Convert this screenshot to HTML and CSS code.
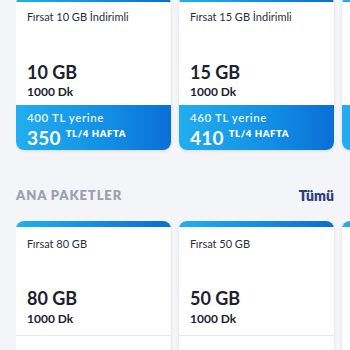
FILE: index.html
```html
<!DOCTYPE html>
<html>
<head>
<meta charset="utf-8">
<link rel="stylesheet" href="styles.css">
</head>
<body>
<div class="page">
  <div class="row row-top">
    <div class="card">
      <div class="bar"></div>
      <div class="body">
        <div class="title">Fırsat 10 GB İndirimli</div>
        <div class="gb">10 GB</div>
        <div class="dk">1000 Dk</div>
      </div>
      <div class="promo">
        <div class="old">400 TL yerine</div>
        <div class="price"><span class="num">350</span><span class="unit">TL/4 HAFTA</span></div>
      </div>
    </div>
    <div class="card">
      <div class="bar"></div>
      <div class="body">
        <div class="title">Fırsat 15 GB İndirimli</div>
        <div class="gb">15 GB</div>
        <div class="dk">1000 Dk</div>
      </div>
      <div class="promo">
        <div class="old">460 TL yerine</div>
        <div class="price"><span class="num">410</span><span class="unit">TL/4 HAFTA</span></div>
      </div>
    </div>
    <div class="card peek">
      <div class="bar"></div>
      <div class="body peek-body"></div>
      <div class="promo"></div>
    </div>
  </div>

  <div class="section">
    <div class="section-title">ANA PAKETLER</div>
    <div class="all">Tümü</div>
  </div>

  <div class="row row-main">
    <div class="card">
      <div class="bar round"></div>
      <div class="body">
        <div class="title">Fırsat 80 GB</div>
        <div class="gb">80 GB</div>
        <div class="dk">1000 Dk</div>
      </div>
      <div class="foot">300 TL/4 HAFTA</div>
    </div>
    <div class="card">
      <div class="bar round"></div>
      <div class="body">
        <div class="title">Fırsat 50 GB</div>
        <div class="gb">50 GB</div>
        <div class="dk">1000 Dk</div>
      </div>
      <div class="foot">200 TL/4 HAFTA</div>
    </div>
    <div class="card peek">
      <div class="bar round"></div>
      <div class="body peek-body"></div>
    </div>
  </div>
</div>
</body>
</html>
```

FILE: styles.css
```css
* { box-sizing: border-box; }
html, body {
  margin: 0;
  padding: 0;
  background: #f4f5f8;
  overflow: hidden;
  width: 350px;
  height: 350px;
}
body {
  font-family: "Lato", "Noto Sans", sans-serif;
  color: #1f2430;
}
.page {
  padding-left: 16px;
}
.row {
  display: flex;
  align-items: flex-start;
  gap: 8px;
  width: 334px;
  overflow: hidden;
  padding-bottom: 4px;
}
.row-top {
  margin-top: -4px;
}
.card {
  width: 155px;
  flex: none;
  background: #fff;
  border-radius: 8px;
  box-shadow: 0 1px 3px rgba(20, 30, 60, 0.12);
  display: flex;
  flex-direction: column;
  overflow: hidden;
}
.peek-body {
  height: 97px;
}
.bar {
  height: 6px;
  background: linear-gradient(90deg, #1fb0f0, #0a6dd4);
}
.body {
  padding: 8px 11px 0;
}
.title {
  font-size: 11px;
  line-height: 14px;
  color: #2a2e38;
}
.gb {
  margin-top: 37px;
  font-size: 18px;
  font-weight: 700;
  line-height: 22px;
  color: #1c2130;
}
.dk {
  font-size: 12px;
  font-weight: 700;
  line-height: 14px;
  margin-top: 2px;
  color: #1c2130;
}
.promo {
  margin-top: 6px;
  height: 45px;
  padding: 6px 11px 0;
  background: linear-gradient(90deg, #22aef0 0%, #128ee4 60%, #0a6ed6 100%);
  color: #fff;
}
.old {
  font-size: 11.5px;
  font-weight: 600;
  line-height: 14px;
  color: rgba(255,255,255,0.92);
  letter-spacing: 0.6px;
}
.price {
  display: flex;
  align-items: flex-start;
  gap: 5px;
  margin-top: 2px;
}
.num {
  font-size: 19px;
  font-weight: 700;
  line-height: 22px;
  letter-spacing: 0.2px;
}
.unit {
  font-size: 9.5px;
  font-weight: 800;
  line-height: 12px;
  margin-top: 1px;
  letter-spacing: 0.6px;
}
.section {
  display: flex;
  justify-content: space-between;
  align-items: center;
  width: 318px;
  margin-top: 31px;
  height: 20px;
}
.section-title {
  font-size: 13px;
  font-weight: 800;
  color: #9ba1b0;
  letter-spacing: 0.9px;
}
.all {
  font-size: 14px;
  font-weight: 800;
  color: #2b3d7e;
}
.row-main {
  margin-top: 16px;
}
.row-main .card {
  height: 200px;
}
.row-main .body {
  padding-top: 10px;
}
.row-main .gb {
  margin-top: 36px;
}
.row-main .dk {
  margin-top: 3px;
}
.foot {
  margin-top: 9px;
  border-top: 1px solid #e6e8ee;
  padding: 12px 11px 0;
  font-size: 11px;
  font-weight: 800;
  color: #2a4ca6;
  letter-spacing: 0.6px;
}
```
